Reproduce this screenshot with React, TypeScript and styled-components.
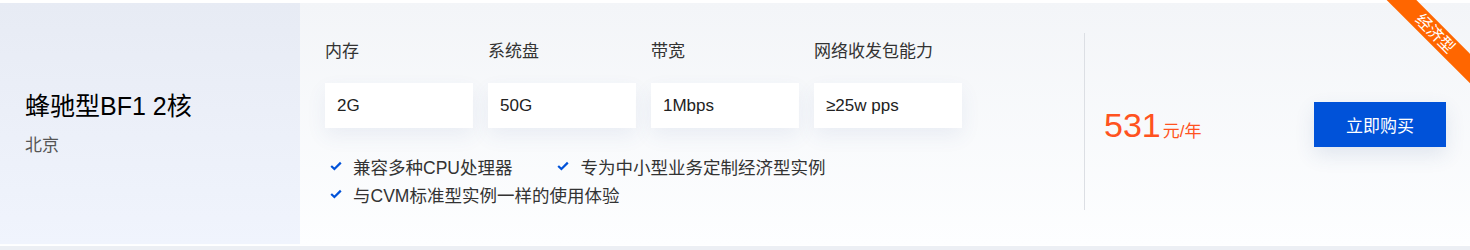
import styled, { createGlobalStyle } from 'styled-components';

const GlobalStyle = createGlobalStyle`
  html, body {
    margin: 0;
    padding: 0;
    background: #ffffff;
  }
  body {
    font-family: "Liberation Sans", "Noto Sans CJK SC", Arial, sans-serif;
    color: #333;
  }
`;

const specs = [
  { label: '内存', value: '2G' },
  { label: '系统盘', value: '50G' },
  { label: '带宽', value: '1Mbps' },
  { label: '网络收发包能力', value: '≥25w pps' },
];

const features = ['兼容多种CPU处理器', '专为中小型业务定制经济型实例', '与CVM标准型实例一样的使用体验'];

function CheckIcon() {
  return (
    <CheckSvg viewBox="0 0 12 10" aria-hidden="true">
      <path d="M1.2 5 L4.4 8 L10.8 1.6" fill="none" stroke="#0052d9" strokeWidth="2.2" />
    </CheckSvg>
  );
}

export default function App() {
  return (
    <Page>
      <GlobalStyle />
      <Card>
        <Ribbon>经济型</Ribbon>
        <InfoPanel>
          <Title>蜂驰型BF1 2核</Title>
          <Region>北京</Region>
        </InfoPanel>
        <Main>
          <SpecGrid>
            {specs.map((s) => (
              <SpecCol key={s.label}>
                <SpecLabel>{s.label}</SpecLabel>
                <SpecValue>{s.value}</SpecValue>
              </SpecCol>
            ))}
          </SpecGrid>
          <FeatureList>
            {features.map((f) => (
              <Feature key={f}>
                <CheckIcon />
                {f}
              </Feature>
            ))}
          </FeatureList>
        </Main>
        <Divider />
        <BuyArea>
          <Price>
            <Amount>531</Amount>
            <Unit>元/年</Unit>
          </Price>
          <BuyButton>立即购买</BuyButton>
        </BuyArea>
      </Card>
      <NextCard />
    </Page>
  );
}

const Page = styled.div`
  width: 1470px;
  height: 250px;
  overflow: hidden;
  position: relative;
  padding-top: 3px;
  box-sizing: border-box;
`;

const Card = styled.div`
  height: 242px;
  display: flex;
  background: linear-gradient(180deg, #f3f5f8 0%, #fdfeff 100%);
`;

const Ribbon = styled.div`
  position: absolute;
  top: 23px;
  right: -35px;
  width: 140px;
  height: 21px;
  line-height: 21px;
  background: #ff6600;
  color: #fff;
  font-size: 16px;
  text-align: center;
  transform: rotate(45deg);
  z-index: 2;
`;

const InfoPanel = styled.div`
  width: 300px;
  height: 241px;
  flex-shrink: 0;
  padding-left: 25px;
  box-sizing: border-box;
  display: flex;
  flex-direction: column;
  justify-content: center;
  background: linear-gradient(180deg, #e7ebf4 0%, #f0f4fd 100%);
`;

const Title = styled.div`
  font-size: 25px;
  line-height: 34px;
  color: #000;
`;

const Region = styled.div`
  margin-top: 11px;
  font-size: 17px;
  line-height: 24px;
  color: #555;
`;

const Main = styled.div`
  flex: 1;
  padding: 37px 0 0 25px;
`;

const SpecGrid = styled.div`
  display: flex;
  gap: 15px;
`;

const SpecCol = styled.div`
  width: 148px;
`;

const SpecLabel = styled.div`
  font-size: 17px;
  line-height: 24px;
  color: #333;
  margin-bottom: 19px;
`;

const SpecValue = styled.div`
  height: 45px;
  line-height: 45px;
  padding-left: 12px;
  background: #fff;
  font-size: 17px;
  color: #222;
  box-shadow: 0 8px 20px rgba(60, 90, 150, 0.08);
`;

const FeatureList = styled.div`
  margin-top: 24px;
  display: flex;
  flex-wrap: wrap;
  width: 700px;
`;

const Feature = styled.div`
  display: flex;
  align-items: center;
  height: 28px;
  font-size: 17.5px;
  color: #333;
  margin-right: 40px;
`;

const CheckSvg = styled.svg`
  width: 12px;
  height: 10px;
  margin: 0 11px 0 5px;
`;

const Divider = styled.div`
  width: 1px;
  height: 177px;
  margin-top: 30px;
  background: #dcdfe4;
`;

const BuyArea = styled.div`
  width: 385px;
  flex-shrink: 0;
  display: flex;
  align-items: center;
  justify-content: space-between;
  padding: 0 24px 0 19px;
  box-sizing: border-box;
`;

const Price = styled.div`
  display: flex;
  align-items: baseline;
  color: #ff5220;
  margin-top: 2px;
`;

const Amount = styled.span`
  font-size: 34px;
  line-height: 40px;
`;

const Unit = styled.span`
  font-size: 17px;
  margin-left: 2px;
`;

const BuyButton = styled.button`
  width: 132px;
  height: 45px;
  border: none;
  background: #0052d9;
  color: #fff;
  font-family: inherit;
  font-size: 17px;
  cursor: pointer;
  box-shadow: 0 8px 20px rgba(50, 80, 140, 0.12);
`;

const NextCard = styled.div`
  height: 5px;
  margin-top: 1px;
  background: #eceff4;
`;
